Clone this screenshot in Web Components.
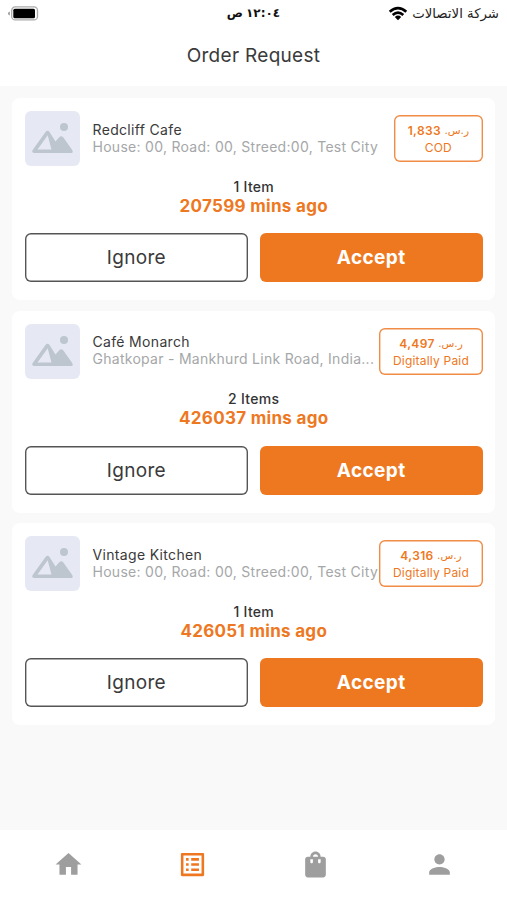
<!DOCTYPE html>
<html lang="en">
<head>
<meta charset="utf-8">
<title>Order Request</title>
<style>
html, body { margin: 0; height: 100%; }
body { font-family: Inter, "DejaVu Sans", sans-serif; background: #f9f9f9; color: #3a3a3a; }
</style>
</head>
<body>
<order-app></order-app>
<script>
class Base extends HTMLElement {
  constructor() {
    super();
    this.attachShadow({ mode: "open" });
  }
  connectedCallback() { this.shadowRoot.innerHTML = this.render(); }
}

customElements.define("status-bar", class extends Base {
  render() {
    return `<style>
      :host { display: grid; grid-template-columns: 1fr auto 1fr; align-items: center; height: 27px; padding: 0 8px; box-sizing: border-box; color: #111; }
      svg { display: block; }
      .time { font: bold 12px/27px "DejaVu Sans", sans-serif; display: flex; justify-content: center; gap: 3px; width: 51px; white-space: nowrap; direction: rtl; }
      .digits { letter-spacing: -1.300px; }
      .net { display: flex; justify-content: flex-end; align-items: center; gap: 4px; }
      .carrier { font: 13.300px/27px "DejaVu Sans", sans-serif; color: #222; direction: rtl; white-space: nowrap; }
    </style>
    <svg width="31" height="16" viewBox="0 0 31 16">
      <path d="M1.8 5.6v4Q0 9.300 0 7.600t1.800-2z" fill="#999"/>
      <rect x="3.700" y=".9" width="25.800" height="13" rx="3.500" fill="#fff" stroke="#aaa" stroke-width="1.300"/>
      <rect x="5.300" y="2.700" width="21.700" height="9.500" rx="1.500" fill="#000"/>
    </svg>
    <div class="time"><span class="digits">١٢:٠٤</span><span>ص</span></div>
    <div class="net">
      <svg width="20" height="15" viewBox="0 0 20 15" fill="none" stroke="#000" stroke-width="2.700">
        <path d="M1.700 5.800Q10-1.500 18.300 5.800M4.700 9Q10 4.300 15.300 9"/>
        <path d="M6.800 10.900Q10 8.300 13.200 10.900L10 14.200z" fill="#000" stroke="none"/>
      </svg>
      <span class="carrier">شركة الاتصالات</span>
    </div>`;
  }
});

customElements.define("app-bar", class extends Base {
  render() {
    return `<style>
      :host { display: block; height: 59px; text-align: center; font-size: 19px; line-height: 58px; letter-spacing: .3px; color: #3a3a3a; }
    </style><slot></slot>`;
  }
});

customElements.define("image-placeholder", class extends Base {
  render() {
    return `<style>
      :host { display: block; width: 55px; height: 55px; border-radius: 6px; background: #e6e9f3; }
      svg { display: block; }
    </style>
    <svg width="55" height="55" viewBox="0 0 55 55">
      <circle cx="39" cy="16" r="4" fill="#bdc5ce"/>
      <path fill="#bdc5ce" fill-rule="evenodd" d="M9 42Q6 41.500 8 38.500L20.500 21Q22.500 18.700 24.500 21L30.500 30.500 34.500 26Q36.300 24.300 38 26L47.200 39Q48.600 41.500 46.500 42zM12.500 38.500H26.500L22.700 24.200z"/>
    </svg>`;
  }
});

customElements.define("pay-badge", class extends Base {
  render() {
    return `<style>
      :host { display: block; flex: none; box-sizing: border-box; height: 47px; padding: 7px 13.500px 0; box-shadow: inset 0 0 0 1.400px #f08c46; border-radius: 6px; text-align: center; color: #ee7822; font-size: 12px; line-height: 17px; letter-spacing: .2px; white-space: nowrap; }
      .price { direction: rtl; display: flex; justify-content: center; gap: 3.500px; font-weight: 600; letter-spacing: .35px; }
      .cur { font: 10.500px/17px "DejaVu Sans", sans-serif; letter-spacing: 0; }
    </style>
    <div class="price"><span class="cur">ر.س.</span><span>${this.getAttribute("amount")}</span></div>
    <div><slot></slot></div>`;
  }
});

customElements.define("action-button", class extends Base {
  render() {
    return `<style>
      :host { display: block; box-sizing: border-box; height: 49px; box-shadow: inset 0 0 0 1.400px #555; border-radius: 6px; text-align: center; font-size: 19px; line-height: 49px; letter-spacing: .3px; color: #3a3a3a; background: #fff; }
      :host([primary]) { background: #ee7820; box-shadow: none; color: #fff; font-weight: 700; letter-spacing: .4px; }
    </style><slot></slot>`;
  }
});

customElements.define("order-card", class extends Base {
  render() {
    const a = n => this.getAttribute(n);
    return `<style>
      :host { display: block; box-sizing: border-box; height: 202px; padding: 13px 12.500px 13px 13px; border-radius: 8px; background: #fff; }
      .top { display: flex; align-items: center; height: 55px; }
      .info { flex: 1; min-width: 0; margin: -1.500px 0 0 12.500px; font-size: 14px; line-height: 17px; white-space: nowrap; }
      .name { letter-spacing: .33px; }
      .addr { color: #a5a7a9; letter-spacing: .28px; }
      .items { margin-top: 11.500px; text-align: center; font-size: 14px; line-height: 18px; font-weight: 500; letter-spacing: .3px; color: #333; }
      .age { text-align: center; font-size: 17px; line-height: 20px; font-weight: 700; letter-spacing: .3px; color: #ee7822; }
      .buttons { display: grid; grid-template-columns: 1fr 1fr; gap: 12px; margin-top: 17.500px; }
    </style>
    <div class="top">
      <image-placeholder></image-placeholder>
      <div class="info"><div class="name">${a("name")}</div><div class="addr">${a("address")}</div></div>
      <pay-badge amount="${a("amount")}">${a("payment")}</pay-badge>
    </div>
    <div class="items">${a("items")}</div>
    <div class="age">${a("age")} mins ago</div>
    <div class="buttons"><action-button>Ignore</action-button><action-button primary>Accept</action-button></div>`;
  }
});

const ICONS = {
  home: "M10 20v-6h4v6h5v-8h3L12 3 2 12h3v8z",
  orders: "M19 5v14H5V5h14m1.100-2H3.900c-.5 0-.9.4-.9.9v16.200c0 .4.4.9.9.9h16.200c.4 0 .9-.5.9-.9V3.900c0-.5-.5-.9-.9-.9zM11 7h6v2h-6V7zm0 4h6v2h-6v-2zm0 4h6v2h-6zM7 7h2v2H7zm0 4h2v2H7zm0 4h2v2H7z",
  bag: "M18 6h-2c0-2.210-1.790-4-4-4S8 3.790 8 6H6c-1.100 0-2 .9-2 2v12c0 1.100.9 2 2 2h12c1.100 0 2-.9 2-2V8c0-1.100-.9-2-2-2zm-8 4c0 .55-.45 1-1 1s-1-.45-1-1V8h2v2zm2-6c1.100 0 2 .9 2 2h-4c0-1.100.9-2 2-2zm4 6c0 .55-.45 1-1 1s-1-.45-1-1V8h2v2z",
  person: "M12 12c2.210 0 4-1.790 4-4s-1.790-4-4-4-4 1.790-4 4 1.790 4 4 4zm0 2c-2.670 0-8 1.340-8 4v2h16v-2c0-2.660-5.330-4-8-4z"
};
customElements.define("nav-item", class extends Base {
  render() {
    return `<style>
      :host { display: flex; justify-content: center; color: #9e9e9e; }
      :host([active]) { color: #ee7822; }
    </style>
    <svg width="31" height="31" viewBox="0 0 24 24" fill="currentColor"><path d="${ICONS[this.getAttribute("icon")]}"/></svg>`;
  }
});

customElements.define("bottom-nav", class extends Base {
  render() {
    return `<style>
      :host { display: grid; grid-template-columns: repeat(4, 1fr); align-items: center; box-sizing: border-box; height: 70px; padding: 0 6px 1px 7px; background: #fff; }
    </style><slot></slot>`;
  }
});

customElements.define("order-app", class extends Base {
  render() {
    return `<style>
      :host { display: flex; flex-direction: column; height: 100vh; }
      header { background: #fff; flex: none; }
      main { flex: 1; padding: 12px; display: flex; flex-direction: column; gap: 10.600px; }
      order-card { flex: none; }
    </style>
    <header><status-bar></status-bar><app-bar>Order Request</app-bar></header>
    <main>
      <order-card name="Redcliff Cafe" address="House: 00, Road: 00, Streed:00, Test City" amount="1,833" payment="COD" items="1 Item" age="207599"></order-card>
      <order-card name="Café Monarch" address="Ghatkopar - Mankhurd Link Road, India..." amount="4,497" payment="Digitally Paid" items="2 Items" age="426037"></order-card>
      <order-card name="Vintage Kitchen" address="House: 00, Road: 00, Streed:00, Test City" amount="4,316" payment="Digitally Paid" items="1 Item" age="426051"></order-card>
    </main>
    <bottom-nav><nav-item icon="home"></nav-item><nav-item icon="orders" active></nav-item><nav-item icon="bag"></nav-item><nav-item icon="person"></nav-item></bottom-nav>`;
  }
});
</script>
</body>
</html>
